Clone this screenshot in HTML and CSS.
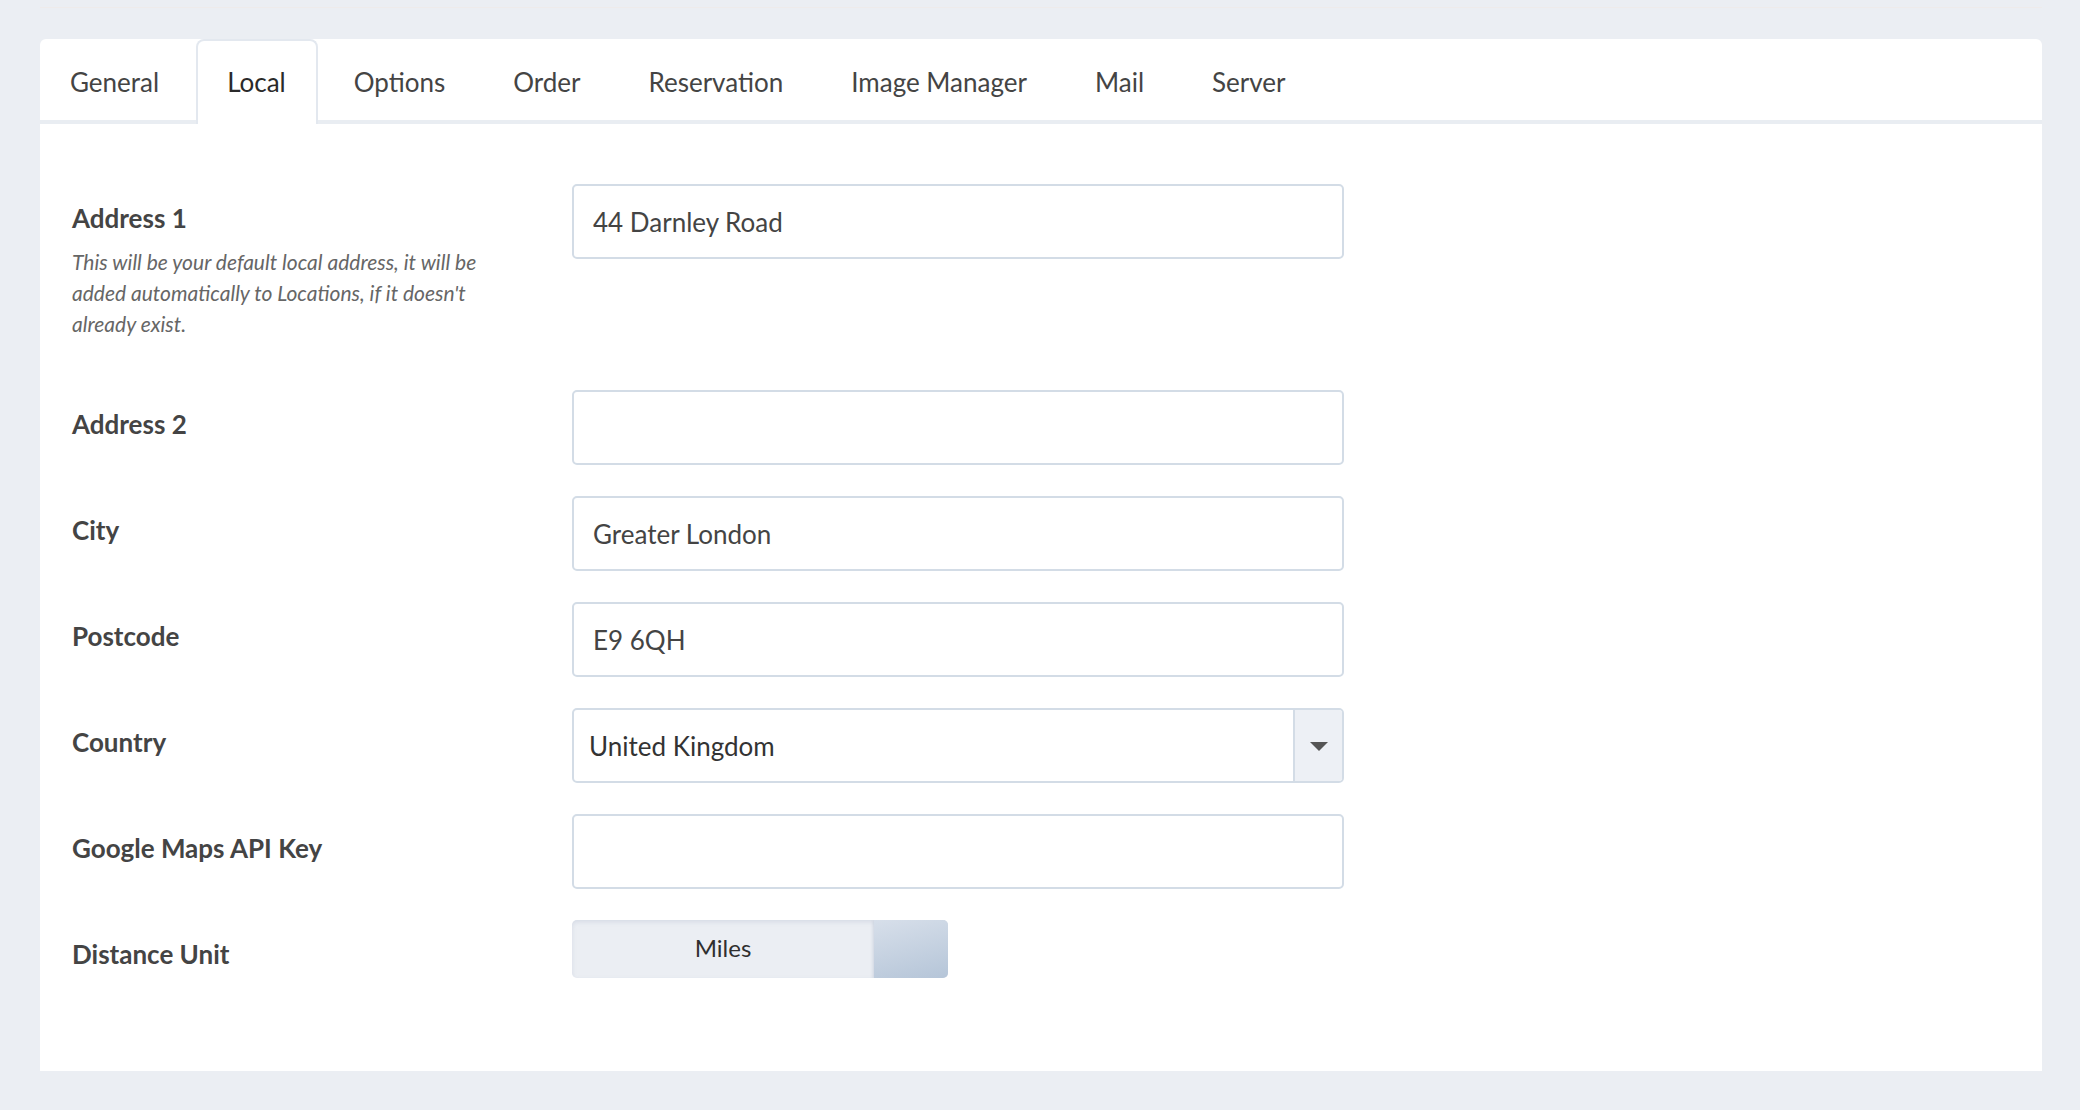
FILE: index.html
```html
<!DOCTYPE html>
<html lang="en">
<head>
<meta charset="utf-8">
<title>Settings - Local</title>
<link rel="stylesheet" href="styles.css">
</head>
<body>
<div class="page">
  <div class="topline"></div>
  <div class="card">
    <nav class="tabs">
      <a class="tab">General</a>
      <a class="tab active">Local</a>
      <a class="tab">Options</a>
      <a class="tab">Order</a>
      <a class="tab">Reservation</a>
      <a class="tab">Image Manager</a>
      <a class="tab">Mail</a>
      <a class="tab">Server</a>
    </nav>
    <div class="form">
      <div class="row">
        <div class="label-col">
          <div class="label">Address 1</div>
          <div class="help">This will be your default local address, it will be added automatically to Locations, if it doesn't already exist.</div>
        </div>
        <div class="field"><div class="input">44 Darnley Road</div></div>
      </div>
      <div class="row">
        <div class="label-col"><div class="label">Address 2</div></div>
        <div class="field"><div class="input"></div></div>
      </div>
      <div class="row">
        <div class="label-col"><div class="label">City</div></div>
        <div class="field"><div class="input">Greater London</div></div>
      </div>
      <div class="row">
        <div class="label-col"><div class="label">Postcode</div></div>
        <div class="field"><div class="input">E9 6QH</div></div>
      </div>
      <div class="row">
        <div class="label-col"><div class="label">Country</div></div>
        <div class="field">
          <div class="select">
            <span class="select-value">United Kingdom</span>
            <span class="select-btn"><span class="caret"></span></span>
          </div>
        </div>
      </div>
      <div class="row">
        <div class="label-col"><div class="label">Google Maps API Key</div></div>
        <div class="field"><div class="input"></div></div>
      </div>
      <div class="row">
        <div class="label-col"><div class="label">Distance Unit</div></div>
        <div class="field">
          <div class="toggle">
            <span class="toggle-text">Miles</span>
            <span class="toggle-handle"></span>
          </div>
        </div>
      </div>
    </div>
  </div>
</div>
</body>
</html>
```

FILE: styles.css
```css
* { box-sizing: border-box; }
html, body { margin: 0; padding: 0; }
body {
  background: #ebeef3;
  font-family: Lato, "Open Sans", "Liberation Sans", sans-serif;
  color: #444;
  height: 1110px;
  overflow: hidden;
}
.page {
  padding: 7px 38px 0 40px;
}
.topline {
  height: 1px;
  background: #eeebeb;
}
.card {
  margin-top: 31px;
  background: #fff;
  border-radius: 6px 6px 0 0;
  height: 1032px;
}
.tabs {
  display: flex;
  gap: 8px;
  height: 85px;
  border-bottom: 4px solid #e9edf2;
}
.tab {
  display: flex;
  align-items: center;
  padding: 3px 28px 0;
  font-size: 26px;
  color: #444;
  border-radius: 8px 8px 0 0;
  border: 2px solid transparent;
  border-bottom: 0;
}
.tab.active {
  background: #fff;
  border-color: #e3e8ef;
  margin: 0 -2px -4px -1px;
  padding: 3px 30px 4px 29px;
  color: #2a2a2a;
}
.form {
  padding: 60px 32px 92px 32px;
  display: flex;
  flex-direction: column;
  gap: 31px;
}
.row {
  display: grid;
  grid-template-columns: 500px 772px;
  align-items: start;
}
.label-col {
  padding-top: 16px;
}
.label {
  font-size: 26px;
  font-weight: 700;
  line-height: 36px;
  color: #444;
}
.help {
  margin-top: 10px;
  margin-bottom: 20px;
  font-size: 21px;
  font-style: italic;
  line-height: 31px;
  color: #666;
  width: 440px;
}
.input {
  height: 75px;
  border: 2px solid #d3dce6;
  border-radius: 5px;
  padding: 0 19px;
  display: flex;
  align-items: center;
  font-size: 26px;
  color: #444;
}
.select {
  height: 75px;
  border: 2px solid #d3dce6;
  border-radius: 5px;
  display: flex;
  align-items: stretch;
  font-size: 26px;
  color: #333;
  overflow: hidden;
}
.select-value {
  flex: 1;
  display: flex;
  align-items: center;
  padding-left: 15px;
}
.select-btn {
  width: 49px;
  border-left: 2px solid #d3dce6;
  background: #edf0f5;
  display: flex;
  align-items: center;
  justify-content: center;
}
.caret {
  width: 0;
  height: 0;
  border-left: 9px solid transparent;
  border-right: 9px solid transparent;
  border-top: 9px solid #555;
  margin-top: 2px;
}
.toggle {
  width: 376px;
  height: 58px;
  border-radius: 5px;
  display: flex;
  overflow: hidden;
  background: #ebeef3;
  box-shadow: inset 0 2px 4px rgba(150, 165, 190, 0.25);
}
.toggle-text {
  flex: 1;
  display: flex;
  align-items: center;
  justify-content: center;
  font-size: 24px;
  color: #2f2f2f;
  padding-bottom: 4px;
}
.toggle-handle {
  width: 74px;
  background: linear-gradient(165deg, #d7dfea 0%, #b5c5d8 100%);
  box-shadow: -1px 1px 3px rgba(120, 140, 170, 0.25);
}
```
